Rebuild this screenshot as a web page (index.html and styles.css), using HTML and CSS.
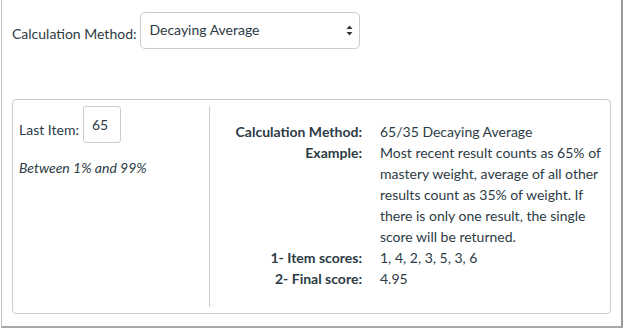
FILE: index.html
```html
<!DOCTYPE html>
<html lang="en">
<head>
    <meta charset="UTF-8">
    <meta name="viewport" content="width=device-width, initial-scale=1.0">
    <title>Calculation Method</title>
    <link rel="stylesheet" href="styles.css">
</head>
<body>
    <div class="frame">
        <div class="method-row">
            <label for="method">Calculation Method:</label>
            <div class="select">
                <span>Decaying Average</span>
                <svg class="arrows" width="7" height="11" viewBox="0 0 7 11">
                    <path d="M3.5 0.5 L6.5 4 L0.5 4 Z" fill="#333"/>
                    <path d="M3.5 10.5 L6.5 7 L0.5 7 Z" fill="#333"/>
                </svg>
            </div>
        </div>

        <div class="panel">
            <div class="settings">
                <div class="input-group">
                    <label for="last-item">Last Item:</label>
                    <div class="num-box" id="last-item">65</div>
                </div>
                <p class="hint">Between 1% and 99%</p>
            </div>
            <div class="details">
                <span class="key">Calculation Method:</span>
                <span>65/35 Decaying Average</span>
                <span class="key">Example:</span>
                <span>Most recent result counts as 65% of mastery weight, average of all other results count as 35% of weight. If there is only one result, the single score will be returned.</span>
                <span class="key">1- Item scores:</span>
                <span>1, 4, 2, 3, 5, 3, 6</span>
                <span class="key">2- Final score:</span>
                <span>4.95</span>
            </div>
        </div>
    </div>
</body>
</html>
```

FILE: styles.css
```css
body {
    font-family: Lato, "Open Sans", sans-serif;
    font-size: 14px;
    color: #2d3b45;
    margin: 0;
    padding: 0;
    background: #fff;
}

.frame {
    box-sizing: border-box;
    margin-left: 1px;
    width: 622px;
    height: 328px;
    padding: 12px 10px 0 10px;
    border-left: 1px solid #c4c4c4;
    border-right: 2px solid #9a9a9a;
    border-bottom: 2px solid #a8a8a8;
}

.method-row {
    display: flex;
    align-items: center;
    gap: 4px;
    height: 37px;
    margin-bottom: 50px;
}

.method-row label {
    padding-top: 5px;
}

.select {
    box-sizing: border-box;
    width: 220px;
    height: 37px;
    display: flex;
    align-items: center;
    justify-content: space-between;
    padding: 0 6px 2px 8px;
    border: 1px solid #c7cdd1;
    border-radius: 5px;
}

.arrows {
    margin-top: 2px;
}

.panel {
    box-sizing: border-box;
    display: flex;
    height: 215px;
    padding: 6px 8px 6px 6px;
    border: 1px solid #c7cdd1;
    border-radius: 4px;
}

.settings {
    width: 190px;
    border-right: 1px solid #c7cdd1;
}

.input-group {
    display: flex;
    align-items: flex-start;
    gap: 4px;
}

.input-group label {
    padding-top: 15px;
}

.num-box {
    box-sizing: border-box;
    width: 38px;
    height: 37px;
    padding: 9px 0 0 8px;
    line-height: 18px;
    border: 1px solid #c7cdd1;
    border-radius: 3px;
}

.hint {
    margin: 16px 0 0;
    font-style: italic;
}

.details {
    flex: 1;
    display: grid;
    grid-template-columns: 152px 1fr;
    column-gap: 18px;
    align-content: start;
    padding-top: 15px;
    line-height: 21px;
}

.key {
    font-weight: bold;
    text-align: right;
}
```
